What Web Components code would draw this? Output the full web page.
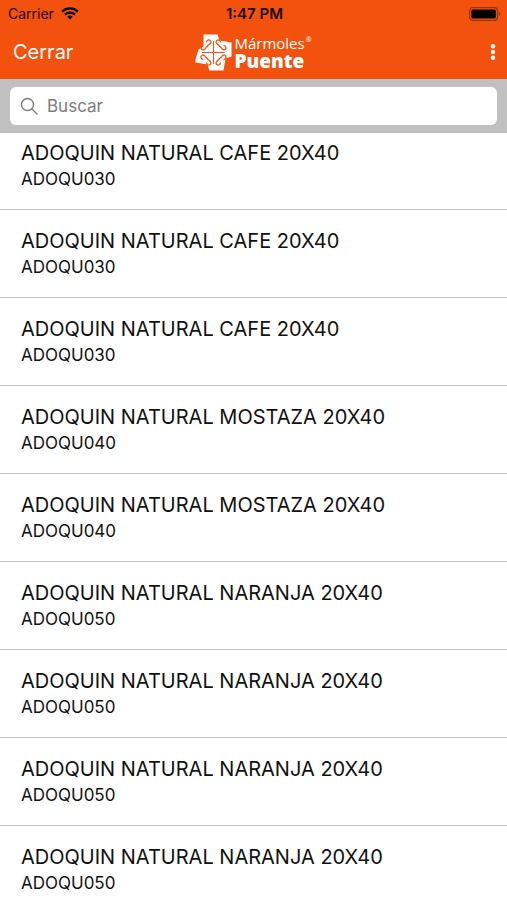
<!DOCTYPE html>
<html lang="es">
<head>
<meta charset="utf-8">
<meta name="viewport" content="width=device-width, initial-scale=1">
<title>Mármoles Puente</title>
<style>
  html, body {
    height: 100%;
    margin: 0;
  }
  body {
    font-family: Inter, "Liberation Sans", sans-serif;
    background: #fff;
    color: #111;
  }
</style>
</head>
<body>
<catalog-app>
  <status-bar slot="top" carrier="Carrier" time="1:47 PM"></status-bar>
  <nav-bar slot="top">
    <span slot="back">Cerrar</span>
    <brand-logo></brand-logo>
  </nav-bar>
  <search-bar slot="top" placeholder="Buscar"></search-bar>
  <product-item code="ADOQU030">ADOQUIN NATURAL CAFE 20X40</product-item>
  <product-item code="ADOQU030">ADOQUIN NATURAL CAFE 20X40</product-item>
  <product-item code="ADOQU030">ADOQUIN NATURAL CAFE 20X40</product-item>
  <product-item code="ADOQU040">ADOQUIN NATURAL MOSTAZA 20X40</product-item>
  <product-item code="ADOQU040">ADOQUIN NATURAL MOSTAZA 20X40</product-item>
  <product-item code="ADOQU050">ADOQUIN NATURAL NARANJA 20X40</product-item>
  <product-item code="ADOQU050">ADOQUIN NATURAL NARANJA 20X40</product-item>
  <product-item code="ADOQU050">ADOQUIN NATURAL NARANJA 20X40</product-item>
  <product-item code="ADOQU050">ADOQUIN NATURAL NARANJA 20X40</product-item>
</catalog-app>

<script>
class CatalogApp extends HTMLElement {
  connectedCallback() {
    this.attachShadow({ mode: 'open' });
    this.shadowRoot.innerHTML = `
    <style>
    :host {
      display: flex;
      flex-direction: column;
      height: 100vh;
    }
    header {
      flex: none;
    }
    main {
      flex: 1;
      min-height: 0;
      overflow-y: auto;
      scrollbar-width: none;
    }
    ::slotted(product-item:first-of-type) {
      --item-top: 7px;
    }
    </style>
    <header><slot name="top"></slot></header>
    <main role="list"><slot></slot></main>
    `;
  }
}
customElements.define('catalog-app', CatalogApp);

class StatusBar extends HTMLElement {
  connectedCallback() {
    this.attachShadow({ mode: 'open' });
    this.shadowRoot.innerHTML = `
    <style>
    :host {
      display: grid;
      grid-template-columns: 1fr auto 1fr;
      align-items: center;
      height: 27px;
      padding: 0 6px 0 8px;
      background: #f3520e;
      color: #200a00;
      font-size: 14px;
      line-height: 27px;
    }
    .carrier {
      display: flex;
      align-items: center;
      gap: 7px;
    }
    .time {
      font-size: 15px;
      font-weight: 600;
    }
    .battery {
      justify-self: end;
    }
    svg {
      display: block;
    }
    </style>
    <div class="carrier">
      <span>${this.getAttribute('carrier')}</span>
      <svg width="18" height="13" viewBox="0 0 18 13" fill="none" stroke="#000" stroke-width="2.2">
        <path d="M1.2 4.6a11.2 11.2 0 0 1 15.6 0"/>
        <path d="M4 7.6a7.2 7.2 0 0 1 10 0"/>
        <path d="M9 12.6 6.3 9.8a3.9 3.9 0 0 1 5.4 0z" fill="#000" stroke="none"/>
      </svg>
    </div>
    <div class="time">${this.getAttribute('time')}</div>
    <svg class="battery" width="32" height="14" viewBox="0 0 32 14">
      <rect x=".7" y=".7" width="27.8" height="12.6" rx="3" fill="none" stroke="#9a3205" stroke-width="1.2"/>
      <rect x="2.4" y="2.5" width="24.4" height="9" rx="1.5" fill="#000"/>
      <path d="M29.8 4.8a2.4 2.4 0 0 1 0 4.4z" fill="#9a3205"/>
    </svg>
    `;
  }
}
customElements.define('status-bar', StatusBar);

class BrandLogo extends HTMLElement {
  connectedCallback() {
    this.attachShadow({ mode: 'open' });
    this.shadowRoot.innerHTML = `
    <style>
    :host {
      display: flex;
      align-items: center;
      gap: 2px;
      color: #fff;
      font-family: "Open Sans", "Noto Sans", sans-serif;
    }
    svg {
      display: block;
    }
    .top {
      display: flex;
      align-items: flex-start;
      gap: 1px;
      font-size: 15px;
      line-height: 18px;
    }
    .reg {
      font-size: 7px;
      line-height: 12px;
    }
    .bottom {
      font-size: 19px;
      line-height: 18px;
      font-weight: 800;
    }
    </style>
    <svg width="37" height="37" viewBox="-18.5 -18.5 37 37">
      <path fill="#fff" d="M-10-18H4L6-12 18-10V4L12 6 10 18H-4L-6 12-18 10V7L-15-3-10-6Z"/>
      <g fill="none" stroke="#f3520e" stroke-width="1.3" stroke-linecap="round">
        <path d="M0-11V11M-11 0H11" stroke-width="1"/>
        <path id="scroll" d="M-7-10.500C-6-14-1.500-12.500-2.800-9.500-3.500-7.500-6-8-6-6-8-6-7.500-3.500-9.500-2.800-12.500-1.500-14-6-10.500-7"/>
        <use href="#scroll" transform="rotate(90)"/>
        <use href="#scroll" transform="rotate(180)"/>
        <use href="#scroll" transform="rotate(270)"/>
      </g>
    </svg>
    <div>
      <div class="top">Mármoles<span class="reg">®</span></div>
      <div class="bottom">Puente</div>
    </div>
    `;
  }
}
customElements.define('brand-logo', BrandLogo);

class NavBar extends HTMLElement {
  connectedCallback() {
    this.attachShadow({ mode: 'open' });
    this.shadowRoot.innerHTML = `
    <style>
    :host {
      display: grid;
      grid-template-columns: 1fr auto 1fr;
      align-items: center;
      height: 50px;
      padding: 0 8px 2px;
      background: #f3520e;
      color: #fff;
    }
    button {
      margin: 0;
      padding: 0;
      border: 0;
      background: none;
      color: inherit;
      font: inherit;
      cursor: pointer;
    }
    .back {
      justify-self: start;
      padding-left: 5px;
      font-size: 20px;
      line-height: 24px;
    }
    .menu {
      justify-self: end;
    }
    svg {
      display: block;
    }
    </style>
    <button class="back" type="button"><slot name="back"></slot></button>
    <slot></slot>
    <button class="menu" type="button" aria-label="Menú">
      <svg width="12" height="18" viewBox="0 0 12 18" fill="#fff">
        <circle cx="6" cy="3.200" r="2.200"/>
        <circle cx="6" cy="9" r="2.200"/>
        <circle cx="6" cy="14.800" r="2.200"/>
      </svg>
    </button>
    `;
  }
}
customElements.define('nav-bar', NavBar);

class SearchBar extends HTMLElement {
  connectedCallback() {
    this.attachShadow({ mode: 'open' });
    const text = this.getAttribute('placeholder');
    this.shadowRoot.innerHTML = `
    <style>
    :host {
      display: block;
      padding: 8px 10px;
      background: #c0c0c0;
    }
    label {
      display: flex;
      align-items: center;
      gap: 9px;
      height: 38px;
      padding: 0 10px;
      border-radius: 6px;
      background: #fff;
    }
    svg {
      flex: none;
    }
    input {
      flex: 1;
      min-width: 0;
      padding: 0;
      border: 0;
      outline: 0;
      background: none;
      color: #111;
      font: inherit;
      font-size: 17px;
      line-height: 24px;
    }
    input::placeholder {
      color: #7b7b7b;
      opacity: 1;
    }
    </style>
    <label>
      <svg width="18" height="18" viewBox="0 0 18 18" fill="none" stroke="#7d7d7d" stroke-width="1.4" stroke-linecap="round">
        <circle cx="7.500" cy="7.500" r="6"/>
        <path d="M12 12l5 5"/>
      </svg>
      <input type="search" placeholder="${text}" aria-label="${text}">
    </label>
    `;
  }
}
customElements.define('search-bar', SearchBar);

class ProductItem extends HTMLElement {
  connectedCallback() {
    this.attachShadow({ mode: 'open' });
    this.setAttribute('role', 'listitem');
    this.shadowRoot.innerHTML = `
    <style>
    :host {
      display: block;
      padding: var(--item-top, 18px) 21px 17px;
      border-bottom: 1px solid #c8c8c8;
      line-height: 26px;
    }
    .name {
      font-size: 20px;
    }
    .code {
      font-size: 17px;
    }
    </style>
    <div class="name"><slot></slot></div>
    <div class="code">${this.getAttribute('code')}</div>
    `;
  }
}
customElements.define('product-item', ProductItem);
</script>
</body>
</html>
